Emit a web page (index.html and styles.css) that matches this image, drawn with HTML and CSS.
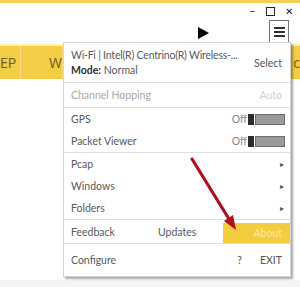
FILE: index.html
```html
<!DOCTYPE html>
<html lang="en">
<head>
  <title>Menu</title>
<link rel="stylesheet" href="styles.css">
</head>
<body>
  <div class="topline"></div>
  <div class="winbar">
    <span class="win-btn">&#8211;</span>
    <span class="win-btn max"></span>
    <span class="win-btn close">&#10005;</span>
  </div>
  <div class="toolbar">
    <span class="play"></span>
    <span class="hamburger"><i></i><i></i><i></i></span>
  </div>
  <div class="table-head">
    <div class="col col-ep">EP</div>
    <div class="col col-w">W</div>
    <div class="col col-rest">c</div>
  </div>
  <div class="footer"></div>

  <div class="menu">
    <div class="item item-adapter">
      <div class="adapter-text">
        <div class="adapter-name">Wi-Fi | Intel(R) Centrino(R) Wireless-...</div>
        <div><b>Mode:</b> Normal</div>
      </div>
      <span class="side">Select</span>
    </div>
    <div class="item disabled">
      <span>Channel Hopping</span>
      <span class="side">Auto</span>
    </div>
    <div class="group">
      <div class="item">
        <span>GPS</span>
        <span class="toggle">Off<span class="knob"></span><span class="track"></span></span>
      </div>
      <div class="item">
        <span>Packet Viewer</span>
        <span class="toggle">Off<span class="knob"></span><span class="track"></span></span>
      </div>
    </div>
    <div class="group">
      <div class="item sub"><span>Pcap</span><span class="arrow">&#9656;</span></div>
      <div class="item sub"><span>Windows</span><span class="arrow">&#9656;</span></div>
      <div class="item sub"><span>Folders</span><span class="arrow">&#9656;</span></div>
    </div>
    <div class="item three">
      <span class="cell">Feedback</span>
      <span class="cell">Updates</span>
      <span class="cell about">About</span>
    </div>
    <div class="item last">
      <span>Configure</span>
      <span class="side"><span class="help">?</span>EXIT</span>
    </div>
  </div>

  <svg class="pointer" width="300" height="287" viewBox="0 0 300 287">
    <line x1="192" y1="159" x2="229" y2="219" stroke="#b0101c" stroke-width="3.2" stroke-linecap="round"/>
    <polygon points="236,230 224,221 233,215" fill="#b0101c"/>
  </svg>
</body>
</html>
```

FILE: styles.css
```css
body {
  margin: 0;
  width: 300px;
  height: 287px;
  overflow: hidden;
  position: relative;
  background-color: #fff;
  font-family: Lato, "Open Sans", sans-serif;
}

.topline {
  height: 3px;
  background-color: #f4d257;
}

.winbar {
  display: flex;
  justify-content: flex-end;
  align-items: center;
  gap: 9px;
  height: 16px;
  padding-right: 7px;
  color: #222;
}

.win-btn {
  font-size: 11px;
  line-height: 12px;
  width: 9px;
  text-align: center;
}

.win-btn.max {
  width: 7px;
  height: 7px;
  border: 1px solid #222;
}

.win-btn.close {
  font-size: 10px;
}

.toolbar {
  display: flex;
  justify-content: flex-end;
  align-items: center;
  height: 24px;
  padding-right: 11px;
}

.play {
  width: 0;
  height: 0;
  border-top: 6px solid transparent;
  border-bottom: 6px solid transparent;
  border-left: 11px solid #000;
  margin-right: 60px;
  margin-top: 3px;
}

.hamburger {
  display: flex;
  flex-direction: column;
  justify-content: center;
  gap: 2px;
  width: 20px;
  height: 23px;
  border: 1px solid #777;
  border-bottom: none;
  align-items: center;
  box-sizing: border-box;
}

.hamburger i {
  display: block;
  width: 11px;
  height: 2px;
  background-color: #333;
}

.table-head {
  display: flex;
  height: 33px;
  border-top: 2px solid #fbeeb3;
  margin-top: 1px;
  background-color: #f3cd45;
  color: #6f5b1c;
  font-family: "Open Sans", sans-serif;
  font-size: 14px;
}

.col {
  display: flex;
  align-items: center;
  border-right: 1px solid #f7dd80;
}

.col-ep {
  width: 20px;
}

.col-w {
  width: 41px;
  justify-content: flex-end;
}

.col-rest {
  flex: 1;
  justify-content: flex-end;
  border-right: none;
}

.footer {
  position: absolute;
  left: 0;
  right: 0;
  bottom: 0;
  height: 7px;
  background-color: #f4f4f4;
}

/* dropdown menu */
.menu {
  position: absolute;
  left: 63px;
  top: 42px;
  width: 226px;
  background-color: #fff;
  border: 1px solid #d4d4d4;
  box-shadow: 2px 2px 2px rgba(0,0,0,0.35);
  font-size: 10.5px;
  color: #5a5a5a;
}

.item {
  display: flex;
  justify-content: space-between;
  align-items: center;
  height: 22px;
  padding: 0 8px 0 7px;
  border-bottom: 1px solid #e0e0e0;
  white-space: nowrap;
}

.group .item {
  border-bottom: none;
}

.group {
  border-bottom: 1px solid #e0e0e0;
}

.item-adapter {
  height: 39px;
}

.adapter-text {
  line-height: 15px;
  margin-top: 1px;
}

.adapter-name {
  letter-spacing: -0.2px;
}

.adapter-text b {
  font-weight: 700;
  color: #333;
}

.side {
  color: #555;
}

.item.disabled {
  height: 24px;
  color: #a9a9a9;
}

.item.disabled .side {
  color: #cfcfcf;
}

.toggle {
  display: flex;
  align-items: center;
  color: #888;
  margin-right: -3px;
}

.knob {
  width: 6px;
  height: 11px;
  margin-left: 1px;
  background-color: #2b2b2b;
}

.track {
  width: 28px;
  height: 9px;
  background-color: #9a9a9a;
  border: 1px solid #6e6e6e;
  margin-left: 1px;
}

.sub {
  height: 22px;
}

.arrow {
  font-size: 8px;
  color: #555;
  margin-right: -2px;
}

.three {
  padding-right: 0;
  height: 23px;
  align-items: stretch;
}

.three .cell {
  display: flex;
  align-items: center;
}

.three .cell:first-child {
  width: 87px;
}

.three .cell:nth-child(2) {
  flex: 1;
}

.about {
  width: 67px;
  justify-content: flex-end;
  padding-right: 8px;
  margin: 3px 0 0;
  box-sizing: border-box;
  background-color: #f4cc40;
  color: #fbe9a8;
}

.item.last {
  height: 32px;
  border-bottom: none;
}

.help {
  margin-right: 18px;
}

.pointer {
  position: absolute;
  left: 0;
  top: 0;
}
```
